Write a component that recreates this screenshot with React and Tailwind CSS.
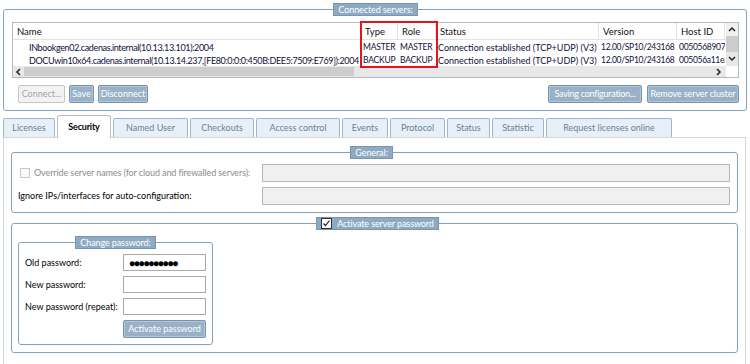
import React from 'react';

const servers = [
  {
    name: 'INbookgen02.cadenas.internal(10.13.13.101):2004',
    type: 'MASTER',
    role: 'MASTER',
    status: 'Connection established (TCP+UDP) (V3)',
    version: '12.00/SP10/243168',
    host: '00505689073',
  },
  {
    name: 'DOCUwin10x64.cadenas.internal(10.13.14.237,[FE80:0:0:0:450B:DEE5:7509:E769]):2004',
    type: 'BACKUP',
    role: 'BACKUP',
    status: 'Connection established (TCP+UDP) (V3)',
    version: '12.00/SP10/243168',
    host: '005056a11ea',
  },
];

// cell text sizes differ per column to follow the original widths
const columns = [
  { key: 'name', label: 'Name', w: 'w-[348px]', cell: 'pl-[16px] text-[9px] tracking-[-0.36px]' },
  { key: 'type', label: 'Type', w: 'w-[37px]', cell: 'pl-[2px] text-[8.5px] tracking-[-0.2px]' },
  { key: 'role', label: 'Role', w: 'w-[38px]', cell: 'pl-[2px] text-[8.5px] tracking-[-0.2px]' },
  { key: 'status', label: 'Status', w: 'w-[163px]', cell: 'pl-[2px] text-[9px]' },
  { key: 'version', label: 'Version', w: 'w-[78px]', cell: 'pl-[2px] text-[8.5px] tracking-[-0.3px]' },
  { key: 'host', label: 'Host ID', w: 'w-[48px]', cell: 'pl-[2px] text-[8.5px] tracking-[-0.3px]' },
];

const tabs = [
  { label: 'Licenses', w: 'w-[52px]' },
  { label: 'Security', w: 'w-[54px]', active: true },
  { label: 'Named User', w: 'w-[75px]' },
  { label: 'Checkouts', w: 'w-[64px]' },
  { label: 'Access control', w: 'w-[84px]' },
  { label: 'Events', w: 'w-[46px]' },
  { label: 'Protocol', w: 'w-[55px]' },
  { label: 'Status', w: 'w-[43px]' },
  { label: 'Statistic', w: 'w-[52px]' },
  { label: 'Request licenses online', w: 'w-[126px]' },
];

function Legend({ children }) {
  return (
    <legend className="mx-auto flex h-[13px] items-center whitespace-nowrap border border-[#7a95ae] bg-[#8eaac2] px-[4px] text-[9px] leading-[11px] tracking-[-0.1px] text-white">
      {children}
    </legend>
  );
}

function Button({ children, disabled, className = '' }) {
  return (
    <button
      type="button"
      className={
        disabled
          ? `h-[18px] whitespace-nowrap rounded-[2px] border border-[#c4c4c4] bg-[#f3f3f3] px-0 text-[9px] text-[#a3a3a3] ${className}`
          : `h-[18px] whitespace-nowrap rounded-[2px] border border-[#7893ad] bg-[#98b1c7] px-0 text-[9px] text-white shadow-[inset_0_0_0_1px_#b3c6d7] ${className}`
      }
    >
      {children}
    </button>
  );
}

function Arrow({ dir }) {
  const d = {
    up: 'M2 6 L5 3 L8 6',
    down: 'M2 3 L5 6 L8 3',
    left: 'M6 2 L3 5 L6 8',
    right: 'M3 2 L6 5 L3 8',
  }[dir];
  return (
    <svg width="10" height="10" viewBox="0 0 10 10">
      <path d={d} fill="none" stroke="#222" strokeWidth="1.5" />
    </svg>
  );
}

function ServerTable() {
  return (
    <div className="relative">
      <div className="flex h-[56px] border border-[#b9b9b9] bg-white">
        <div className="flex min-w-0 flex-1 flex-col">
          <div className="flex h-[17px] shrink-0 border-b border-[#e2e2e2]">
            {columns.map((c) => (
              <div
                key={c.key}
                className={`${c.w} shrink-0 overflow-hidden whitespace-nowrap border-r border-[#e2e2e2] pl-[4px] text-[9.5px] leading-[17px] text-[#111]`}
              >
                {c.label}
              </div>
            ))}
          </div>
          {servers.map((s) => (
            <div key={s.name} className="flex h-[13px] shrink-0">
              {columns.map((c) => (
                <div
                  key={c.key}
                  className={`${c.w} ${c.cell} shrink-0 overflow-hidden whitespace-nowrap leading-[15px] text-[#10103a]`}
                >
                  {s[c.key]}
                </div>
              ))}
            </div>
          ))}
          <div className="flex h-[11px] shrink-0 items-center bg-[#e8e8e8]">
            <div className="flex w-[11px] justify-center">
              <Arrow dir="left" />
            </div>
            <div className="h-[9px] w-[330px] bg-[#cdcdcd]" />
            <div className="flex-1" />
            <div className="flex w-[14px] justify-center">
              <Arrow dir="right" />
            </div>
          </div>
        </div>
        <div className="flex w-[12px] flex-col">
          <div className="flex h-[13px] items-center justify-center bg-[#f0f0f0]">
            <Arrow dir="up" />
          </div>
          <div className="h-[16px] bg-[#cdcdcd]" />
          <div className="flex flex-1 items-center justify-center bg-[#e8e8e8]">
            <Arrow dir="down" />
          </div>
          <div className="h-[11px] bg-white" />
        </div>
      </div>
      <div className="absolute left-[348px] top-[-1px] h-[47px] w-[78px] border-2 border-[#e5141b]" />
    </div>
  );
}

function TextBox({ disabled, value }) {
  return (
    <div
      className={
        disabled
          ? 'h-[18px] flex-1 border border-[#b8b8b8] bg-[#f0f0f0]'
          : 'flex h-[17px] w-[83px] items-center overflow-hidden border border-[#a9a9a9] bg-white px-[5px] text-[10px] leading-none tracking-[-1.2px] text-black'
      }
    >
      {value}
    </div>
  );
}

export default function App() {
  return (
    <div className="h-[364px] w-[750px] overflow-hidden bg-white px-[3px] pt-[3px] font-['Lato',sans-serif] text-[9px] text-black">
      <fieldset className="rounded-[3px] border border-[#86a2bb] pb-[7px] pl-[8px] pr-[7px] pt-[6px]">
        <Legend>Connected servers:</Legend>
        <ServerTable />
        <div className="mt-[7px] flex items-center pl-[6px]">
          <Button disabled className="w-[47px]">Connect...</Button>
          <Button className="ml-[4px] w-[25px]">Save</Button>
          <Button className="ml-[4px] w-[50px]">Disconnect</Button>
          <div className="flex-1" />
          <Button className="w-[94px] tracking-[-0.25px]">Saving configuration...</Button>
          <Button className="ml-[5px] w-[92px] tracking-[-0.1px]">Remove server cluster</Button>
        </div>
      </fieldset>

      <div className="mt-[4px] flex items-end gap-[2px]">
        {tabs.map((t) =>
          t.active ? (
            <div
              key={t.label}
              className={`${t.w} relative z-10 -mb-px flex h-[23px] items-center justify-center whitespace-nowrap rounded-t-[3px] border border-b-0 border-[#bdbdbd] bg-white text-[9px] font-bold tracking-[-0.2px]`}
            >
              {t.label}
            </div>
          ) : (
            <div
              key={t.label}
              className={`${t.w} flex h-[19px] items-center justify-center whitespace-nowrap rounded-t-[2px] border border-b-0 border-[#9fb5c9] bg-[#e7f0f8] text-[9px] text-[#6d7f8f]`}
            >
              {t.label}
            </div>
          )
        )}
      </div>

      <div className="mr-[1px] h-[260px] border border-[#d6d6d6] px-[7px] pt-[8px]">
        <fieldset className="rounded-[3px] border border-[#86a2bb] pb-[7px] pl-[1px] pr-[7px] pt-[5px]">
          <Legend>General:</Legend>
          <div className="flex items-center">
            <div className="flex w-[249px] items-center whitespace-nowrap text-[#8c8c8c]">
              <div className="ml-[7px] h-[10px] w-[10px] border border-[#c9c9c9] bg-[#fafafa]" />
              <span className="ml-[4px] tracking-[-0.1px]">Override server names (for cloud and firewalled servers):</span>
            </div>
            <TextBox disabled />
          </div>
          <div className="mt-[5px] flex items-center">
            <div className="w-[249px] whitespace-nowrap pl-[5px] text-[9px]">Ignore IPs/interfaces for auto-configuration:</div>
            <TextBox disabled />
          </div>
        </fieldset>

        <fieldset className="mt-[4px] rounded-[3px] border border-[#86a2bb] pb-[7px] pl-[6px] pt-[6px]">
          <Legend>
            <svg width="11" height="11" viewBox="0 0 11 11" className="mr-[5px]">
              <rect x="0.5" y="0.5" width="10" height="10" fill="#fff" stroke="#333" />
              <path d="M2.5 5.5 L4.5 7.5 L8.5 2.5" fill="none" stroke="#222" strokeWidth="1.2" />
            </svg>
            Activate server password
          </Legend>
          <fieldset className="w-[195px] rounded-[3px] border border-[#86a2bb] pb-[6px] pl-[6px] pr-[6px] pt-[5px]">
            <Legend>Change password:</Legend>
            <div className="flex items-center justify-between whitespace-nowrap">
              <span>Old password:</span>
              <TextBox value="●●●●●●●●●●" />
            </div>
            <div className="mt-[5px] flex items-center justify-between whitespace-nowrap">
              <span>New password:</span>
              <TextBox />
            </div>
            <div className="mt-[5px] flex items-center justify-between whitespace-nowrap">
              <span>New password (repeat):</span>
              <TextBox />
            </div>
            <div className="mt-[5px] flex justify-end">
              <Button className="w-[83px]">Activate password</Button>
            </div>
          </fieldset>
        </fieldset>
      </div>
    </div>
  );
}
